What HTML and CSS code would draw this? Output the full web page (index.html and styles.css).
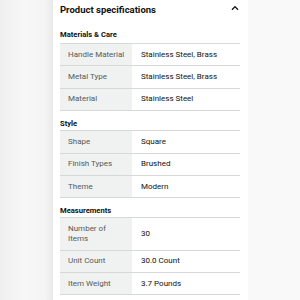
FILE: index.html
```html
<!DOCTYPE html>
<html>
<head>
<meta charset="utf-8">
<link rel="stylesheet" href="styles.css">
</head>
<body>
<div class="page">
  <div class="panel">
    <div class="title-bar">
      <h1 class="title">Product specifications</h1>
      <svg class="chevron" width="8" height="6" viewBox="0 0 8 6"><path d="M1 4.8 L4 1.6 L7 4.8" fill="none" stroke="#0f1111" stroke-width="1.3"/></svg>
    </div>

    <h2 class="section first">Materials &amp; Care</h2>
    <div class="specs">
      <div class="row"><div class="label">Handle Material</div><div class="value">Stainless Steel, Brass</div></div>
      <div class="row"><div class="label">Metal Type</div><div class="value">Stainless Steel, Brass</div></div>
      <div class="row"><div class="label">Material</div><div class="value">Stainless Steel</div></div>
    </div>

    <h2 class="section">Style</h2>
    <div class="specs">
      <div class="row"><div class="label">Shape</div><div class="value">Square</div></div>
      <div class="row"><div class="label">Finish Types</div><div class="value">Brushed</div></div>
      <div class="row"><div class="label">Theme</div><div class="value">Modern</div></div>
    </div>

    <h2 class="section">Measurements</h2>
    <div class="specs">
      <div class="row"><div class="label">Number of<br>Items</div><div class="value">30</div></div>
      <div class="row"><div class="label">Unit Count</div><div class="value">30.0 Count</div></div>
      <div class="row"><div class="label">Item Weight</div><div class="value">3.7 Pounds</div></div>
    </div>
  </div>
</div>
</body>
</html>
```

FILE: styles.css
```css
html, body {
  margin: 0;
  padding: 0;
  height: 300px;
  overflow: hidden;
}
body {
  font-family: Roboto, "Noto Sans", sans-serif;
  color: #0f1111;
  background: #f9f9f9;
}
.page {
  display: flex;
  height: 300px;
  background: linear-gradient(to right, #efefef 0px, #f7f7f7 25px, #f4f4f4 45px, #e9e9e9 53px, #f9f9f9 53px, #f9f9f9 100%);
}
.panel {
  margin-left: 53px;
  width: 195px;
  box-sizing: border-box;
  padding: 0 8px 0 7px;
  background: #fff;
}
.title-bar {
  display: flex;
  justify-content: space-between;
  align-items: center;
  height: 20px;
}
.title {
  margin: 0;
  font-size: 9.5px;
  font-weight: 700;
  line-height: 20px;
}
.chevron {
  margin-right: 1px;
  margin-top: -5px;
}
.section {
  margin: 8px 0 1px;
  font-size: 7.6px;
  font-weight: 700;
  line-height: 10px;
}
.section.first {
  margin: 10px 0 3px;
}
.specs {
  border-bottom: 1px solid #d5d9d9;
}
.row {
  display: grid;
  grid-template-columns: 72px 1fr;
  border-top: 1px solid #d5d9d9;
  font-size: 8px;
  line-height: 10px;
}
.label {
  background: #f0f2f2;
  color: #565959;
  padding: 5.7px 8px;
  white-space: nowrap;
  display: flex;
  align-items: center;
}
.value {
  padding: 5.7px 9px;
  display: flex;
  align-items: center;
}
```
